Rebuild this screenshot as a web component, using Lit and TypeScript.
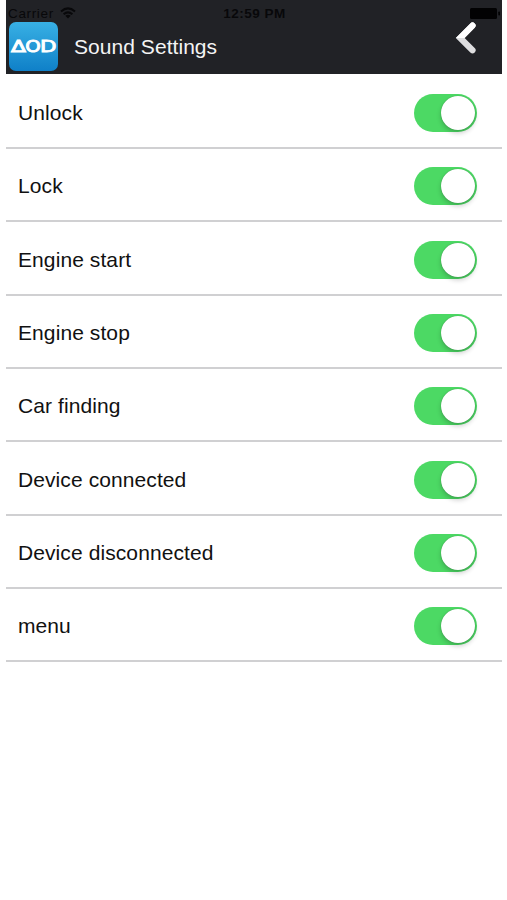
import { LitElement, html, css } from "lit";
import { customElement, property, state } from "lit/decorators.js";

@customElement("toggle-switch")
class ToggleSwitch extends LitElement {
  static styles = css`
    :host { display: block; }
    .track {
      display: flex;
      justify-content: flex-end;
      align-items: center;
      box-sizing: border-box;
      width: 63px;
      height: 38px;
      padding: 0 2px;
      border: 0;
      border-radius: 19px;
      background: #4cd964;
    }
    .track.off { justify-content: flex-start; background: #e5e5e5; }
    .knob {
      width: 34px;
      height: 34px;
      border-radius: 50%;
      background: #fff;
      box-shadow: 0 3px 5px rgba(0, 0, 0, 0.2), 0 0 1px rgba(0, 0, 0, 0.35);
    }
  `;
  @property({ type: Boolean }) on = false;
  render() {
    return html`<button class="track ${this.on ? "" : "off"}" role="switch" aria-checked=${this.on}>
      <span class="knob"></span>
    </button>`;
  }
}

@customElement("app-root")
class AppRoot extends LitElement {
  static styles = css`
    :host {
      display: block;
      height: 900px;
      overflow: hidden;
      background: #fff;
      font-family: "Liberation Sans", Arial, sans-serif;
      color: #111;
    }
    .screen { margin: 0 5px 0 6px; }
    header {
      display: flex;
      flex-direction: column;
      height: 73.5px;
      background: #212226;
    }
    .status {
      display: grid;
      grid-template-columns: 1fr auto 1fr;
      align-items: center;
      height: 22px;
      padding: 4px 1px 0 2px;
      box-sizing: border-box;
      font-size: 13.5px;
      color: #08080a;
    }
    .carrier { display: flex; align-items: center; gap: 6px; }
    .carrier span { letter-spacing: 0.65px; }
    .time { font-weight: bold; font-size: 13.5px; letter-spacing: 0.5px; }
    .battery { justify-self: end; display: block; }
    .bar { display: flex; height: 49px; padding-left: 3px; }
    .logo {
      width: 49px;
      height: 49px;
      border-radius: 7px;
      background: linear-gradient(#38b0e4, #0f80c8);
    }
    .mark {
      font-family: "DejaVu Sans", sans-serif;
      font-size: 15px;
      fill: #fff;
      stroke: #fff;
      stroke-width: 0.8px;
    }
    .title {
      flex: 1;
      margin-left: 16px;
      line-height: 50px;
      font-size: 21px;
      letter-spacing: 0.05px;
      color: #f4f4f4;
    }
    .back { margin-right: 24px; }
    .row {
      display: flex;
      align-items: center;
      justify-content: space-between;
      box-sizing: border-box;
      height: 73.35px;
      padding: 3px 25px 0 12px;
      border-bottom: 2px solid #d0d0d2;
      font-size: 21px;
      letter-spacing: 0.09px;
    }
    .row:first-child { height: 75.5px; padding-top: 4.5px; }
    svg { display: block; }
  `;
  @state() sounds = ["Unlock", "Lock", "Engine start", "Engine stop", "Car finding", "Device connected", "Device disconnected", "menu"];
  render() {
    return html`<div class="screen">
      <header>
        <div class="status">
          <div class="carrier"><span>Carrier</span>
            <svg width="16" height="12" viewBox="0 0 16 12" fill="none" stroke="#08080a" stroke-width="2">
              <path d="M1 4.5Q8-1.7 15 4.5M3.6 7.3Q8 3.5 12.4 7.3" />
              <path d="M8 11.5L5.3 8.8Q8 6.8 10.7 8.8Z" fill="#08080a" stroke="none" />
            </svg>
          </div>
          <span class="time">12:59 PM</span>
          <svg class="battery" width="31" height="11" viewBox="0 0 31 11" fill="#020203">
            <rect width="27" height="11" rx="1.5" /><rect x="28.3" y="3.5" width="1.7" height="4" rx=".8" />
          </svg>
        </div>
        <div class="bar">
          <div class="logo" role="img" aria-label="AOD">
            <svg width="49" height="49" viewBox="0 0 49 49" class="mark">
              <text x="2" y="30" textLength="15" lengthAdjust="spacingAndGlyphs">Δ</text>
              <text x="16.2" y="30" textLength="15.5" lengthAdjust="spacingAndGlyphs">O</text>
              <text x="31" y="30" textLength="16.5" lengthAdjust="spacingAndGlyphs">D</text>
            </svg>
          </div>
          <div class="title">Sound Settings</div>
          <svg class="back" width="24" height="36" viewBox="0 0 24 36">
            <defs><clipPath id="upper"><rect width="24" height="16" /></clipPath></defs>
            <path d="M18.5 3.6L6.2 16L18.5 28.2" fill="none" stroke="#dedee0" stroke-width="6.2" stroke-linecap="round" />
            <path d="M18.5 3.6L6.2 16L18.5 28.2" fill="none" stroke="#fff" stroke-width="6.2" stroke-linecap="round" clip-path="url(#upper)" />
          </svg>
        </div>
      </header>
      <main>${this.sounds.map((s) => html`<div class="row"><span>${s}</span><toggle-switch on></toggle-switch></div>`)}</main>
    </div>`;
  }
}
